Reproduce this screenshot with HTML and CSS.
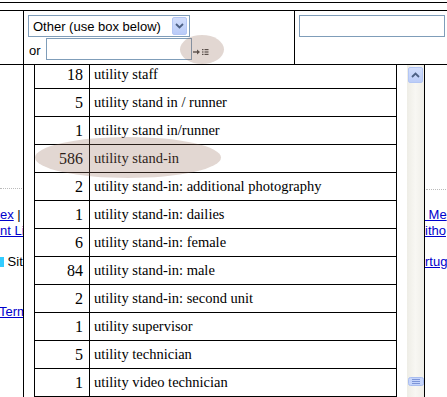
FILE: index.html
```html
<!DOCTYPE html>
<html lang="en">
<head>
  <meta charset="UTF-8" />
  <title>Credit type picker</title>
  <link rel="stylesheet" href="styles.css">
</head>
<body>
  <div class="top-rule"></div>

  <div class="form-row">
    <div class="side"></div>
    <div class="field-cell">
      <div class="select">
        <span>Other (use box below)</span>
        <span class="select-btn">
          <svg width="9" height="6" viewBox="0 0 9 6"><path d="M1 1 L4.5 4.5 L8 1" fill="none" stroke="#4d6185" stroke-width="1.8"/></svg>
        </span>
      </div>
      <div class="or-line">
        <span class="or">or</span>
        <span class="text-input"></span>
        <svg class="suggest-icon" width="16" height="8" viewBox="0 0 16 8">
          <path d="M0 4 H5" stroke="#444" stroke-width="1.4"/>
          <path d="M4 1.5 L7 4 L4 6.5 Z" fill="#444"/>
          <rect x="9" y="1" width="1.5" height="1.2" fill="#444"/>
          <rect x="9" y="3.4" width="1.5" height="1.2" fill="#444"/>
          <rect x="9" y="5.8" width="1.5" height="1.2" fill="#444"/>
          <rect x="11.5" y="1" width="4" height="1.2" fill="#444"/>
          <rect x="11.5" y="3.4" width="4" height="1.2" fill="#444"/>
          <rect x="11.5" y="5.8" width="4" height="1.2" fill="#444"/>
        </svg>
      </div>
    </div>
    <div class="extra-cell">
      <span class="text-input"></span>
    </div>
  </div>

  <div class="body-row">
    <div class="left-col">
      <div class="dots"></div>
      <div class="line first"><a href="#">ex</a> |</div>
      <div class="line"><a href="#">nt Li</a></div>
      <div class="line site"><span class="site-mark"></span> Site</div>
      <div class="line terms"><a href="#">Term</a></div>
    </div>
    <div class="main-col"></div>
    <div class="right-col">
      <div class="dots"></div>
      <div class="line first"><a href="#">&nbsp;Me</a></div>
      <div class="line"><a href="#">itho</a></div>
      <div class="line site"><a href="#">rtuga</a></div>
    </div>
  </div>

  <div class="picker">
    <div class="picker-list">
      <table class="credits">
        <tr><td class="count">18</td><td class="name">utility staff</td></tr>
        <tr><td class="count">5</td><td class="name">utility stand in / runner</td></tr>
        <tr><td class="count">1</td><td class="name">utility stand in/runner</td></tr>
        <tr><td class="count">586</td><td class="name">utility stand-in</td></tr>
        <tr><td class="count">2</td><td class="name">utility stand-in: additional photography</td></tr>
        <tr><td class="count">1</td><td class="name">utility stand-in: dailies</td></tr>
        <tr><td class="count">6</td><td class="name">utility stand-in: female</td></tr>
        <tr><td class="count">84</td><td class="name">utility stand-in: male</td></tr>
        <tr><td class="count">2</td><td class="name">utility stand-in: second unit</td></tr>
        <tr><td class="count">1</td><td class="name">utility supervisor</td></tr>
        <tr><td class="count">5</td><td class="name">utility technician</td></tr>
        <tr><td class="count">1</td><td class="name">utility video technician</td></tr>
      </table>
    </div>
    <div class="scroll-track">
      <span class="scroll-up">
        <svg width="9" height="6" viewBox="0 0 9 6"><path d="M1 5 L4.5 1.5 L8 5" fill="none" stroke="#4d6185" stroke-width="1.8"/></svg>
      </span>
      <span class="scroll-grip">
        <svg width="16" height="9" viewBox="0 0 16 9">
          <rect x="0.5" y="0.5" width="15" height="8" rx="2" fill="#c6d5fb" stroke="#a9bdf0"/>
          <path d="M4 2.5 H12 M4 4.5 H12 M4 6.5 H12" stroke="#7d95d8" stroke-width="1"/>
        </svg>
      </span>
    </div>
  </div>

  <div class="spot spot-icon"></div>
  <div class="spot spot-row"></div>
</body>
</html>
```

FILE: styles.css
```css
* {
  box-sizing: border-box;
  margin: 0;
  padding: 0;
}

body {
  position: relative;
  width: 447px;
  height: 397px;
  overflow: hidden;
  background-color: #fff;
  color: #000;
  font-family: "Liberation Sans", Arial, sans-serif;
  font-size: 13px;
}

a {
  color: #0000cc;
}

.top-rule {
  height: 1px;
  margin-top: 2px;
  background-color: #000;
}

.form-row {
  display: flex;
  height: 55px;
  margin-top: 7px;
  border-top: 1px solid #000;
  border-bottom: 1px solid #000;
}

.side {
  width: 24px;
  border-right: 1px solid #000;
}

.field-cell {
  width: 271px;
  padding: 4px 0 0 4px;
  border-right: 1px solid #000;
}

.extra-cell {
  flex: 1;
  padding: 4px 0 0 4px;
}

.select {
  display: flex;
  align-items: center;
  justify-content: space-between;
  width: 162px;
  height: 22px;
  padding: 0 2px 0 4px;
  border: 1px solid #7f9db9;
  line-height: 15px;
}

.select-btn {
  display: flex;
  align-items: center;
  justify-content: center;
  width: 15px;
  height: 18px;
  border: 1px solid #b3c6f4;
  border-radius: 2px;
  background: linear-gradient(#d2defc, #b9cbf8);
}

.or-line {
  display: flex;
  align-items: flex-end;
  margin-top: 1px;
}

.or {
  width: 17px;
  margin-left: 1px;
  line-height: 16px;
  padding-bottom: 1px;
}

.text-input {
  display: block;
  width: 146px;
  height: 22px;
  border: 1px solid #7f9db9;
  background-color: #fff;
}

.suggest-icon {
  margin: 0 0 4px 1px;
}

.body-row {
  display: flex;
  height: 332px;
}

.left-col {
  width: 24px;
  padding-top: 123px;
  border-right: 1px solid #000;
  overflow: hidden;
  white-space: nowrap;
}

.main-col {
  width: 401px;
}

.right-col {
  flex: 1;
  padding-top: 124px;
  overflow: hidden;
  white-space: nowrap;
}

.dots {
  border-top: 1px dotted #bbb;
  margin-right: 1px;
}

.right-col .dots {
  margin-left: 1px;
}

.line {
  line-height: 16px;
}

.line.first {
  margin-top: 18px;
}

.right-col .line.first {
  margin-top: 17px;
}

.line.site {
  margin-top: 15px;
}

.line.terms {
  margin-top: 34px;
  margin-left: -1px;
}

.site-mark {
  display: inline-block;
  width: 4px;
  height: 10px;
  vertical-align: -1px;
  background-color: #33ccff;
}

/* dropdown list laid over the page */
.picker {
  position: absolute;
  left: 34px;
  top: 65px;
  display: flex;
  width: 391px;
  height: 332px;
  border-right: 1px solid #000;
  background-color: #fff;
  overflow: hidden;
}

.picker-list {
  width: 363px;
  margin-top: -5px;
}

.credits {
  width: 363px;
  border-collapse: collapse;
  font-family: "Liberation Serif", "Times New Roman", serif;
  font-size: 14.5px;
}

.credits td {
  border: 1px solid #000;
  padding: 0;
  line-height: 27px;
  white-space: nowrap;
}

.credits .count {
  width: 55px;
  padding-right: 6px;
  text-align: right;
  font-size: 16px;
}

.credits .name {
  padding-left: 4px;
}

.scroll-track {
  display: flex;
  flex-direction: column;
  width: 17px;
  margin-left: 10px;
  background: linear-gradient(to right, #eeede6, #f8f7f3 50%, #efeee8);
}

.scroll-up {
  display: flex;
  align-items: center;
  justify-content: center;
  width: 15px;
  height: 16px;
  margin: 2px 0 0 1px;
  border: 1px solid #b3c6f4;
  border-radius: 2px;
  background: linear-gradient(#d2defc, #bccdf8);
}

.scroll-grip {
  display: block;
  height: 9px;
  margin: auto 0 11px 1px;
  line-height: 0;
}

.spot {
  position: absolute;
  border-radius: 50%;
  background-color: rgba(150, 112, 92, 0.28);
  pointer-events: none;
}

.spot-icon {
  left: 180px;
  top: 35px;
  width: 44px;
  height: 29px;
}

.spot-row {
  left: 35px;
  top: 137px;
  width: 186px;
  height: 41px;
}
```
